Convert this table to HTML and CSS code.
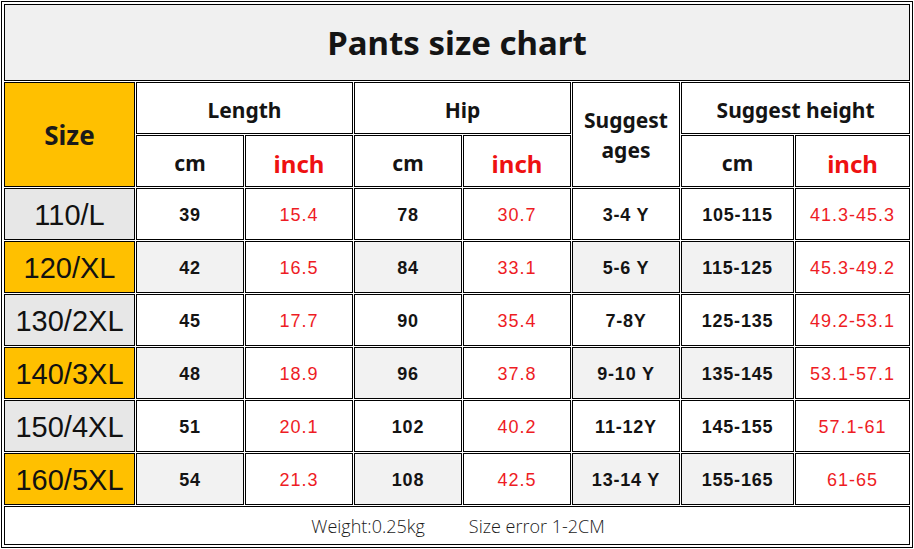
FILE: index.html
```html
<!DOCTYPE html>
<html>
<head>
<meta charset="utf-8">
<link rel="stylesheet" href="styles.css">
</head>
<body>
<table class="chart">
  <colgroup>
    <col class="c-size"><col class="c-std"><col class="c-std"><col class="c-std"><col class="c-std"><col class="c-std"><col class="c-hcm"><col class="c-hin">
  </colgroup>
  <tr class="r-title"><td colspan="8" class="title">Pants size chart</td></tr>
  <tr class="r-head">
    <td rowspan="2" class="size-head">Size</td>
    <td colspan="2" class="head">Length</td>
    <td colspan="2" class="head">Hip</td>
    <td rowspan="2" class="head ages">Suggest ages</td>
    <td colspan="2" class="head">Suggest height</td>
  </tr>
  <tr class="r-head">
    <td class="head">cm</td><td class="head red-head">inch</td>
    <td class="head">cm</td><td class="head red-head">inch</td>
    <td class="head">cm</td><td class="head red-head">inch</td>
  </tr>
  <tr class="r-data">
    <td class="size gray-size">110/L</td>
    <td class="num">39</td><td class="red">15.4</td><td class="num">78</td><td class="red">30.7</td><td class="num">3-4 Y</td><td class="num">105-115</td><td class="red">41.3-45.3</td>
  </tr>
  <tr class="r-data alt">
    <td class="size yellow">120/XL</td>
    <td class="num g">42</td><td class="red">16.5</td><td class="num g">84</td><td class="red">33.1</td><td class="num g">5-6 Y</td><td class="num g">115-125</td><td class="red">45.3-49.2</td>
  </tr>
  <tr class="r-data">
    <td class="size gray-size">130/2XL</td>
    <td class="num">45</td><td class="red">17.7</td><td class="num">90</td><td class="red">35.4</td><td class="num">7-8Y</td><td class="num">125-135</td><td class="red">49.2-53.1</td>
  </tr>
  <tr class="r-data alt">
    <td class="size yellow">140/3XL</td>
    <td class="num g">48</td><td class="red">18.9</td><td class="num g">96</td><td class="red">37.8</td><td class="num g">9-10 Y</td><td class="num g">135-145</td><td class="red">53.1-57.1</td>
  </tr>
  <tr class="r-data">
    <td class="size gray-size">150/4XL</td>
    <td class="num">51</td><td class="red">20.1</td><td class="num">102</td><td class="red">40.2</td><td class="num">11-12Y</td><td class="num">145-155</td><td class="red">57.1-61</td>
  </tr>
  <tr class="r-data alt">
    <td class="size yellow">160/5XL</td>
    <td class="num g">54</td><td class="red">21.3</td><td class="num g">108</td><td class="red">42.5</td><td class="num g">13-14 Y</td><td class="num g">155-165</td><td class="red">61-65</td>
  </tr>
  <tr class="r-foot">
    <td colspan="8" class="foot"><span class="foot-item">Weight:0.25kg</span><span class="foot-item">Size error 1-2CM</span></td>
  </tr>
</table>
</body>
</html>
```
FILE: styles.css
```css
html, body {
  margin: 0;
  padding: 0;
  background: #ffffff;
}

.chart {
  margin: 1px 0 0 1px;
  border: 1px solid #000;
  padding: 1px;
  border-collapse: separate;
  border-spacing: 1px;
  table-layout: fixed;
  width: 912px;
  font-family: "Liberation Sans", Arial, sans-serif;
  color: #111;
}

.c-size { width: 131px; }
.c-std { width: 108px; }
.c-hcm { width: 113px; }
.c-hin { width: 115px; }

.chart td {
  border: 1px solid #000;
  padding: 0;
  text-align: center;
  vertical-align: middle;
  box-sizing: border-box;
  background: #fff;
}

.r-title td { height: 77px; }
.r-head td { height: 52px; }
.r-data td { height: 52px; }
.r-foot td { height: 39px; }

.title {
  background: #f0f0f0 !important;
  font-family: "Noto Sans", "Open Sans", sans-serif;
  font-weight: 700;
  font-size: 33px;
  color: #141414;
  padding-bottom: 1px !important;
}

.head {
  font-family: "Noto Sans", "Open Sans", sans-serif;
  font-weight: 700;
  font-size: 21px;
  color: #141414;
  padding-top: 4px !important;
}

.ages {
  line-height: 30px;
  padding: 0 6px !important;
}

.size-head {
  background: #ffc000 !important;
  font-family: "Noto Sans", "Open Sans", sans-serif;
  font-weight: 700;
  font-size: 26px;
  color: #1a1a1a;
}

.red-head {
  color: #ee1111;
  font-size: 24px;
}

.size {
  font-size: 29px;
  color: #111;
  padding-top: 2px !important;
}

.gray-size { background: #e7e7e7 !important; }
.yellow { background: #ffc000 !important; }

.num {
  font-weight: 700;
  font-size: 18px;
  letter-spacing: 0.8px;
  color: #141414;
  padding-top: 3px !important;
}

.g { background: #f2f2f2 !important; }

.red {
  color: #ee1c24;
  font-size: 18px;
  letter-spacing: 1px;
  padding-top: 3px !important;
}

.foot {
  font-family: "Open Sans", "Noto Sans", sans-serif;
  font-weight: 300;
  font-size: 18px;
  color: #1a1a1a;
  padding-left: 2px !important;
}

.foot-item + .foot-item { margin-left: 44px; }
```
